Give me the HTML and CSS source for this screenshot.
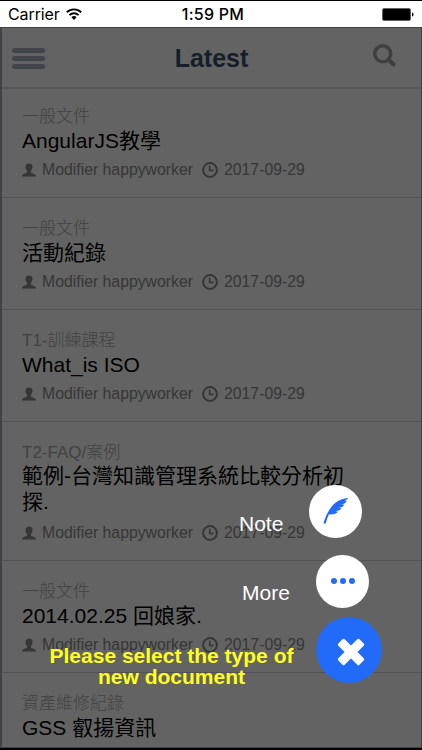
FILE: index.html
```html
<!DOCTYPE html>
<html lang="zh-Hant">
<head>
<meta charset="utf-8">
<title>Latest</title>
<link rel="stylesheet" href="styles.css">
</head>
<body>
<svg class="defs" width="0" height="0">
  <symbol id="user" viewBox="0 0 14 14"><path d="M7 .6c2.200 0 3.500 1.400 3.500 3.500 0 1.700-.8 3.100-1.600 3.900v1.200c0 .7.700.9 2 1.300 2 .6 3 1.100 3 2.900H.1c0-1.800 1-2.300 3-2.900 1.300-.4 2-.6 2-1.300V8C4.300 7.200 3.500 5.800 3.500 4.100 3.500 2 4.800.6 7 .6z"/></symbol>
  <symbol id="clock" viewBox="0 0 16 16"><circle cx="8" cy="8" r="6.900" fill="none" stroke="currentColor" stroke-width="2"/><path d="M7.700 3.800v4.600h3.800" fill="none" stroke="currentColor" stroke-width="1.600"/></symbol>
</svg>
<div class="phone">
  <div class="status">
    <span class="carrier">Carrier</span>
    <svg class="wifi" width="16" height="12" viewBox="0 0 16 12"><g fill="none" stroke="#000" stroke-width="1.900"><path d="M.8 4.300a10.300 10.300 0 0 1 14.400 0"/><path d="M3.400 7.100a6.600 6.600 0 0 1 9.200 0"/></g><path d="M8 12 5.400 9.300a3.700 3.700 0 0 1 5.200 0z"/></svg>
    <span class="time">1:59 PM</span>
    <svg class="battery" width="32" height="13" viewBox="0 0 32 13"><rect x=".5" y=".5" width="28" height="12" rx="1.500" stroke="#555" stroke-width=".7"/><path d="M30 4.500c2 .4 2 3.600 0 4z"/></svg>
  </div>
  <div class="app">
    <header class="header">
      <div class="burger"><i></i><i></i><i></i></div>
      <h1>Latest</h1>
      <svg class="search" width="23" height="23" viewBox="0 0 23 23" fill="none" stroke="#3f3f3f"><circle cx="9.700" cy="9.700" r="8" stroke-width="3.400"/><path d="m15.500 15.500 5 5" stroke-width="4" stroke-linecap="round"/></svg>
    </header>
    <main class="list">
      <article><div class="cat">一般文件</div><h2>AngularJS教學</h2><div class="meta"><svg class="user"><use href="#user"/></svg><span class="who">Modifier happyworker</span><svg class="clock"><use href="#clock"/></svg><span>2017-09-29</span></div></article>
      <article><div class="cat">一般文件</div><h2>活動紀錄</h2><div class="meta"><svg class="user"><use href="#user"/></svg><span class="who">Modifier happyworker</span><svg class="clock"><use href="#clock"/></svg><span>2017-09-29</span></div></article>
      <article><div class="cat">T1-訓練課程</div><h2>What_is ISO</h2><div class="meta"><svg class="user"><use href="#user"/></svg><span class="who">Modifier happyworker</span><svg class="clock"><use href="#clock"/></svg><span>2017-09-29</span></div></article>
      <article><div class="cat">T2-FAQ/案例</div><h2 class="two-line">範例-台灣知識管理系統比較分析初<br>探.</h2><div class="meta"><svg class="user"><use href="#user"/></svg><span class="who">Modifier happyworker</span><svg class="clock"><use href="#clock"/></svg><span>2017-09-29</span></div></article>
      <article><div class="cat">一般文件</div><h2>2014.02.25 回娘家.</h2><div class="meta"><svg class="user"><use href="#user"/></svg><span class="who">Modifier happyworker</span><svg class="clock"><use href="#clock"/></svg><span>2017-09-29</span></div></article>
      <article><div class="cat">資產維修紀錄</div><h2>GSS 叡揚資訊</h2></article>
    </main>
  </div>
  <div class="overlay">
    <span class="label note">Note</span>
    <button class="fab fab-note"><svg width="26" height="28" viewBox="0 0 26 28"><path fill="#226bf8" d="M.7 25.600C2.200 20.500 4 16.500 7 12 11 6 16.500 1.700 24.800 1c.3 1.200-1.200 2-2.900 2.600l1.600.6c-.7 1.900-2.700 2.800-5.300 3.100l3.100.5c-.9 2-3 2.800-5.700 3l2.900.8c-1.200 1.800-3.400 2.400-6 2.300l2.600 1.200c-2.200 2-5.700 2.600-9.300 2.400C4.700 20 3.700 22.700 2.900 25.700c-.4 1.500-2.600 1.300-2.200-.1z"/></svg></button>
    <span class="label more">More</span>
    <button class="fab fab-more"><i></i><i></i><i></i></button>
    <button class="fab fab-close"><svg width="28" height="28" viewBox="-14 -14 28 28" fill="#fff"><g transform="rotate(45)"><rect x="-15" y="-4.500" width="30" height="9" rx="1.600"/><rect x="-4.500" y="-15" width="9" height="30" rx="1.600"/></g></svg></button>
    <p class="prompt">Please select the type of<br>new document</p>
  </div>
</div>
</body>
</html>
```
FILE: styles.css
```css
* { box-sizing: border-box; }
body { margin: 0; font-family: "Liberation Sans", "Noto Sans CJK TC", sans-serif; }
.defs { position: absolute; }
.phone { position: relative; width: 422px; height: 750px; overflow: hidden; background: #000; }
.status { height: 27px; border-top: 1px solid #000; background: #fff; display: grid; grid-template-columns: 58px 1fr 32px; align-items: center; padding: 0 8px; font-family: Inter, sans-serif; }
.carrier { font-size: 16px; letter-spacing: -.1px; }
.wifi { position: absolute; left: 66px; top: 8px; }
.time { font-size: 16px; font-weight: 500; letter-spacing: .25px; text-align: center; padding-right: 22px; }
.battery { position: absolute; left: 382px; top: 8px; }
.app { height: 721px; overflow: hidden; background: #636363; border: solid #424246; border-width: 1px 1px 1px 2px; }
.header { height: 61px; display: flex; align-items: center; justify-content: space-between; padding: 0 25px 0 10px; border-bottom: 2px solid #575757; }
.burger { width: 33px; display: flex; flex-direction: column; gap: 3px; margin-top: 2px; }
.burger i { height: 5px; border-radius: 3px; background: #40444a; }
h1 { margin: 0; padding-left: 5px; font-size: 25px; line-height: 30px; color: #161e2a; }
.search { margin-top: -4px; }
article { padding: 19px 20px 14px; border-bottom: 1px solid #525252; }
article:first-child { padding-top: 16px; }
.cat { height: 23px; line-height: 24px; font-size: 17px; color: #424242; font-weight: 300; white-space: nowrap; }
h2 { margin: -1px 0 2px; font-size: 21px; line-height: 27px; font-weight: 400; color: #000; white-space: nowrap; }
.two-line { line-height: 26px; padding-bottom: 2px; }
.meta { display: flex; align-items: center; height: 27px; padding-top: 1px; font-size: 15.800px; color: #363636; white-space: nowrap; }
.meta svg { fill: currentColor; flex: none; }
.user { width: 14px; height: 14px; margin-right: 6px; }
.who { width: 152px; }
.clock { width: 16px; height: 16px; margin: 0 6px 0 8px; }
.overlay { position: absolute; inset: 0; }
.label { position: absolute; font-size: 21px; line-height: 24px; color: #fff; }
.note { left: 239px; top: 512px; }
.more { left: 242px; top: 581px; }
.fab { position: absolute; width: 53px; height: 53px; border: 0; padding: 0; border-radius: 50%; background: #fff; display: flex; align-items: center; justify-content: center; }
.fab-note { left: 309px; top: 485px; padding-bottom: 1px; }
.fab-more { left: 316px; top: 555px; gap: 3px; padding-bottom: 2px; }
.fab-more i { width: 6px; height: 6px; border-radius: 50%; background: #226bf8; }
.fab-close { left: 316px; top: 617px; width: 66px; height: 66px; background: #226bf8; padding: 4px 0 0 4px; }
.prompt { position: absolute; left: 40px; top: 645px; width: 263px; margin: 0; text-align: center; font-size: 21px; line-height: 21px; font-weight: 700; color: #ff2; white-space: nowrap; }
```
